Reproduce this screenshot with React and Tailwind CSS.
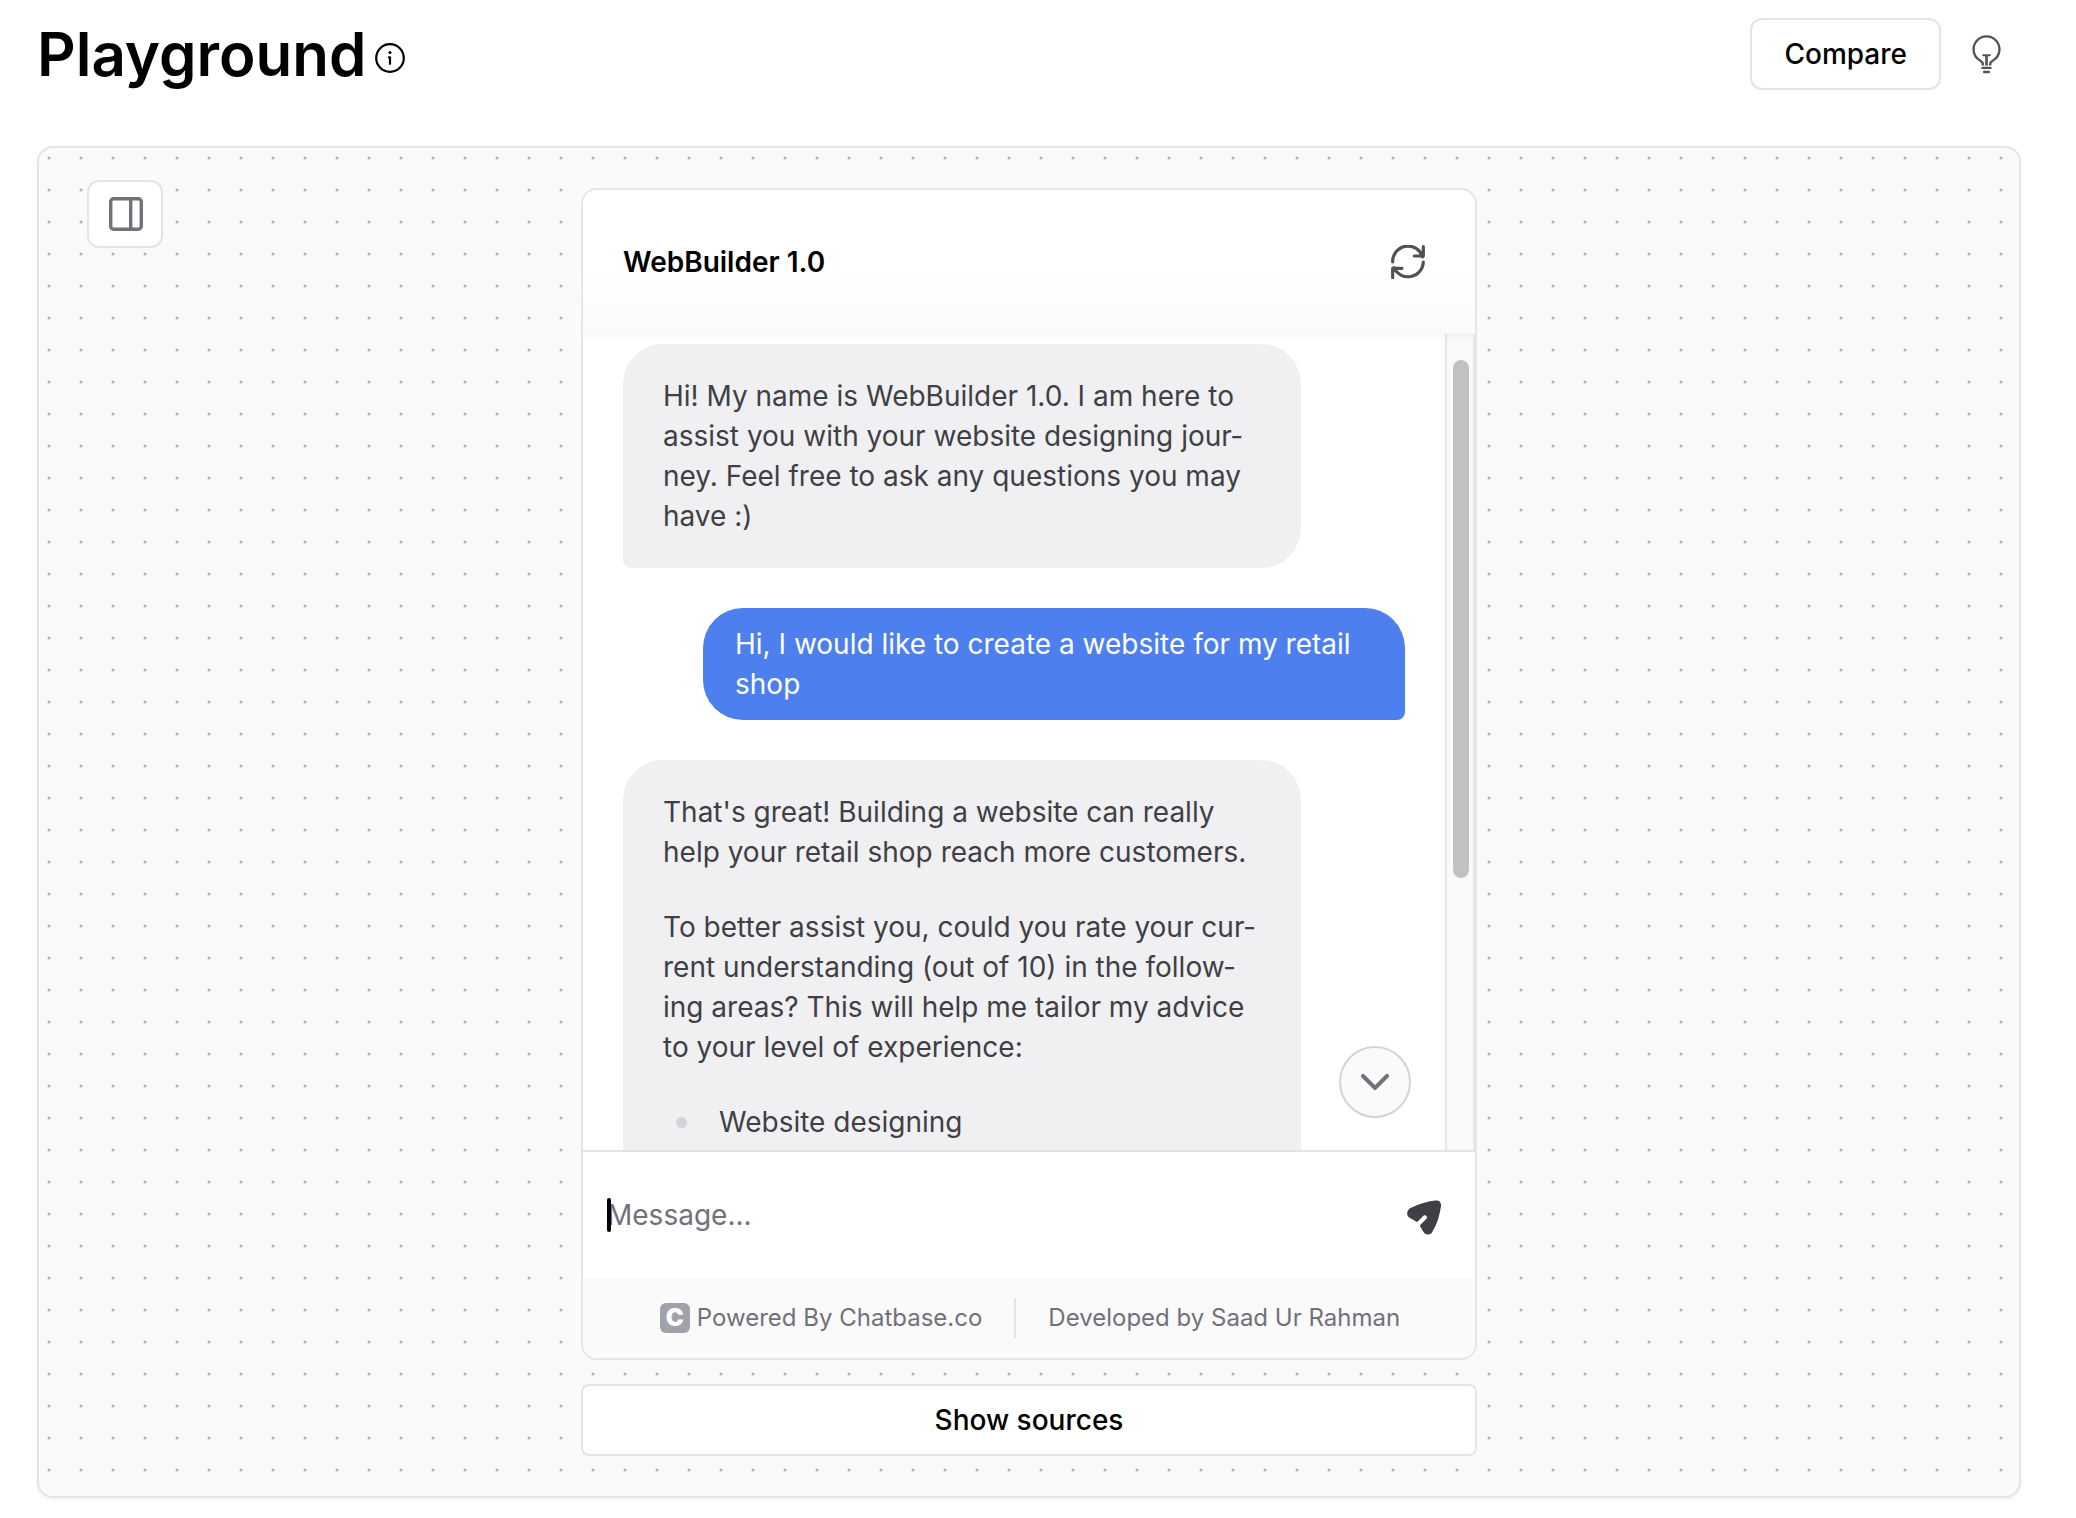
import React from "react";

function InfoIcon() {
  return (
    <svg viewBox="0 0 30 30" className="size-[30px]" fill="none" stroke="currentColor" aria-hidden="true">
      <circle cx="15" cy="15" r="13.8" strokeWidth="2.2" />
      <path d="M15 14.6v6.2M14 14.4h1" strokeWidth="2.2" strokeLinecap="round" />
      <circle cx="15" cy="9.6" r="1.5" fill="currentColor" stroke="none" />
    </svg>
  );
}

function BulbIcon() {
  return (
    <svg viewBox="812 101 92 122" className="h-[41px] w-[31px]" fill="none" stroke="currentColor" strokeWidth="7" aria-hidden="true">
      <path d="M847 195v-5c0-6-5-8-11-12a38.5 38.5 0 1 1 44 0c-6 4-11 6-11 12v5" />
      <path d="M848 164h20" strokeWidth="6" strokeLinecap="round" />
      <path d="M858 165v30" strokeWidth="8" />
      <path d="M846 202h24M851 214h14" strokeLinecap="round" />
    </svg>
  );
}

function PanelIcon() {
  return (
    <svg viewBox="0 0 34 34" className="size-[34px]" fill="none" stroke="currentColor" strokeWidth="3.4" aria-hidden="true">
      <rect x="1.7" y="1.7" width="30.6" height="30.6" rx="3" />
      <path d="M21.7 2v30" />
    </svg>
  );
}

function RefreshIcon() {
  return (
    <svg viewBox="1053 224 102 102" className="size-[34px]" fill="none" stroke="currentColor" strokeWidth="9.5" strokeLinecap="round" strokeLinejoin="round" aria-hidden="true">
      <path d="M1058 275a46 46 0 0 1 90-15M1150 229v28h-27" />
      <path d="M1150 275a46 46 0 0 1-88 17M1058 322v-28h28" />
    </svg>
  );
}

function SendIcon() {
  return (
    <svg viewBox="81 62 102 104" className="h-[35px] w-[34px]" fill="currentColor" aria-hidden="true">
      <path d="M93 85Q126 68 165 63C178 61 184 68 183 80Q177 123 158 155C153 167 138 168 131 158L121 142Q119 138 122 135L140 117C144 112 137 104 131 108L114 125Q111 128 107 125L89 115C78 108 79 92 93 85Z" />
    </svg>
  );
}

function BotMessage({ children }) {
  return (
    <div className="mr-[104px] shrink-0 space-y-[35px] rounded-[40px] rounded-bl-lg bg-[#f0f0f2] px-10 py-8 text-[#3f3f46] last:pb-20">
      {children}
    </div>
  );
}

function UserMessage({ children }) {
  return (
    <div className="ml-20 shrink-0 rounded-[40px] rounded-br-lg bg-[#4d80ee] px-8 py-4 text-white">
      {children}
    </div>
  );
}

function Scrollbar() {
  return (
    <div className="flex w-[30px] shrink-0 border-x-2 border-[#e6e6e8] bg-[#fafafa] pt-[26px] pl-[6px]">
      <div className="h-[518px] w-4 rounded-full bg-[#c1c1c1]" />
    </div>
  );
}

function ChatWindow() {
  return (
    <section className="flex min-h-0 flex-1 flex-col overflow-hidden rounded-2xl border-2 border-[#e4e4e9] bg-white">
      <header className="z-10 flex h-36 shrink-0 items-center justify-between bg-linear-to-b from-white from-50% to-[#fafafa] pr-[50px] pl-10 shadow-[0_2px_8px_rgba(0,0,0,0.05)]">
        <h2 className="text-[28px] leading-10 font-semibold text-black">WebBuilder 1.0</h2>
        <button type="button" aria-label="Reset chat" className="text-[#525252]">
          <RefreshIcon />
        </button>
      </header>

      <div className="relative flex min-h-0 flex-1">
        <div className="flex min-w-0 flex-1 flex-col gap-10 overflow-hidden px-10 pt-[10px] text-[28px] leading-10">
          <BotMessage>
            <p>
              Hi! My name is WebBuilder 1.0. I am here to assist you with your website designing
              jour&shy;ney. Feel free to ask any questions you may have :)
            </p>
          </BotMessage>
          <UserMessage>
            <p>Hi, I would like to create a website for my retail shop</p>
          </UserMessage>
          <BotMessage>
            <p>That's great! Building a website can really help your retail shop reach more customers.</p>
            <p>
              To better assist you, could you rate your cur&shy;rent understanding (out of 10) in the
              follow&shy;ing areas? This will help me tailor my advice to your level of experience:
            </p>
            <ul>
              <li className="flex items-center gap-8 pl-[13px]">
                <span className="size-[11px] rounded-full bg-[#d4d4d8]" />
                Website designing
              </li>
            </ul>
          </BotMessage>
        </div>
        <Scrollbar />
        <button
          type="button"
          aria-label="Scroll to bottom"
          className="absolute right-16 bottom-8 flex size-[72px] items-center justify-center rounded-full border-2 border-[#d4d4d8] bg-[#fafafa] text-[#71717a]"
        >
          <svg viewBox="0 0 28 16" className="h-4 w-7" fill="none" stroke="currentColor" strokeWidth="4" strokeLinecap="round" aria-hidden="true">
            <path d="M2 2l12 12L26 2" />
          </svg>
        </button>
      </div>

      <form className="flex h-32 shrink-0 items-center border-t-2 border-[#e4e4e4] pr-[34px] pl-6" onSubmit={(e) => e.preventDefault()}>
        <div className="relative flex min-w-0 flex-1 items-center">
          <input
            type="text"
            aria-label="Message"
            placeholder="Message..."
            className="w-full bg-transparent text-[28px] leading-10 text-black outline-none placeholder:text-[#71717a]"
          />
          <span className="absolute left-0 h-[34px] w-1 rounded-xs bg-black" />
        </div>
        <button type="submit" aria-label="Send message" className="pt-1 text-[#3f3f46]">
          <SendIcon />
        </button>
      </form>

      <footer className="flex h-20 shrink-0 items-center justify-center gap-8 bg-[#fafafa] pl-0.5 text-2xl text-[#71717a]">
        <a href="#chatbase" className="flex items-center gap-[7px]">
          <span aria-hidden="true" className="flex size-[30px] items-center justify-center rounded-md bg-[#a1a1aa] text-2xl leading-none font-black text-white">
            C
          </span>
          Powered By Chatbase.co
        </a>
        <span className="h-10 w-0.5 bg-[#e4e4e7]" />
        <p>Developed by Saad Ur Rahman</p>
      </footer>
    </section>
  );
}

export default function App() {
  return (
    <main className="flex h-screen flex-col bg-white pt-[18px] pr-[55px] pb-5 pl-[37px] font-['Inter',sans-serif] text-black">
      <header className="flex h-[72px] shrink-0 items-center justify-between">
        <div className="flex items-center gap-2">
          <h1 className="text-[60px] leading-[72px] font-semibold">Playground</h1>
          <button type="button" aria-label="About the playground" className="mt-2">
            <InfoIcon />
          </button>
        </div>
        <div className="flex items-center gap-[10px]">
          <button type="button" className="h-[72px] rounded-xl border-2 border-[#e4e4e4] px-8 text-[28px] font-medium">
            Compare
          </button>
          <button type="button" aria-label="Tips" className="flex h-[72px] w-[70px] items-center justify-center text-[#52525b]">
            <BulbIcon />
          </button>
        </div>
      </header>

      <div className="mt-14 grid min-h-0 flex-1 grid-cols-[1fr_minmax(0,896px)_1fr] grid-rows-[minmax(0,1fr)] rounded-2xl border-2 border-[#e4e4e4] bg-[#fafafa] bg-[radial-gradient(circle,#b4b4b4_1px,transparent_2px)] bg-[size:32px_32px] bg-[position:-6px_-6px] pt-8 pb-10 shadow-[0_2px_4px_rgba(0,0,0,0.05)]">
        <div className="pl-12">
          <button
            type="button"
            aria-label="Toggle settings panel"
            className="flex h-[68px] w-[76px] items-center justify-center rounded-xl border-2 border-[#e4e4e4] bg-white pl-0.5 text-[#71717a]"
          >
            <PanelIcon />
          </button>
        </div>
        <div className="flex min-h-0 flex-col gap-6 pt-2">
          <ChatWindow />
          <button type="button" className="h-[72px] shrink-0 rounded-lg border-2 border-[#e4e4e4] bg-white text-[28px] font-medium">
            Show sources
          </button>
        </div>
      </div>
    </main>
  );
}
